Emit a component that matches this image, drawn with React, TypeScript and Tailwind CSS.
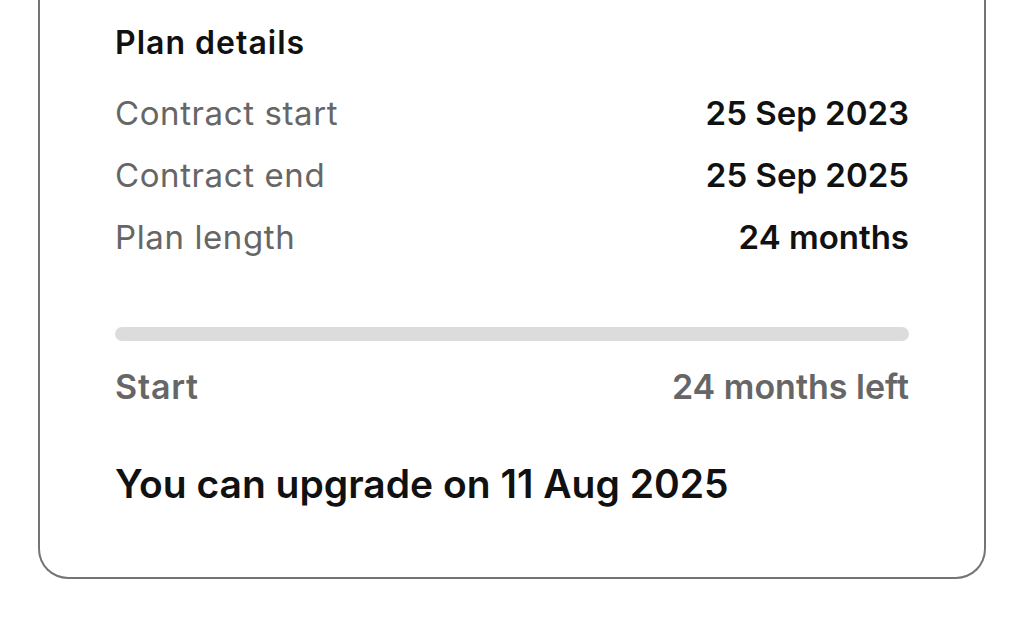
import React from 'react';

const rows = [
  { label: 'Contract start', value: '25 Sep 2023' },
  { label: 'Contract end', value: '25 Sep 2025' },
  { label: 'Plan length', value: '24 months' },
];

export default function App() {
  return (
    <div className="w-[1024px] h-[621px] bg-white overflow-hidden font-['Inter',sans-serif]">
      <div className="mx-[38px] border-2 border-t-0 border-[#747474] rounded-b-[30px] px-[75px] pt-[24px] pb-[70px]">
        {/* Plan details */}
        <h3 className="text-[32px] leading-[38px] font-semibold text-[#111111] tracking-[1px]">Plan details</h3>
        <div className="mt-[21px] flex flex-col">
          {rows.map((r) => (
            <div key={r.label} className="flex items-center justify-between h-[62px]">
              <span className="text-[33px] text-[#666666] tracking-[0.6px]">{r.label}</span>
              <span className="text-[33px] font-semibold text-[#111111]">{r.value}</span>
            </div>
          ))}
        </div>

        {/* Progress */}
        <div className="mt-[58px] h-[14px] rounded-full bg-[#dcdcdc]"></div>
        <div className="mt-[24px] flex items-center justify-between h-[42px]">
          <span className="text-[34px] font-semibold text-[#666666] tracking-[0.8px]">Start</span>
          <span className="text-[34px] font-semibold text-[#666666]">24 months left</span>
        </div>

        <p className="mt-[54px] text-[39px] leading-[46px] font-semibold text-[#111111]">You can upgrade on 11 Aug 2025</p>
      </div>
    </div>
  );
}
